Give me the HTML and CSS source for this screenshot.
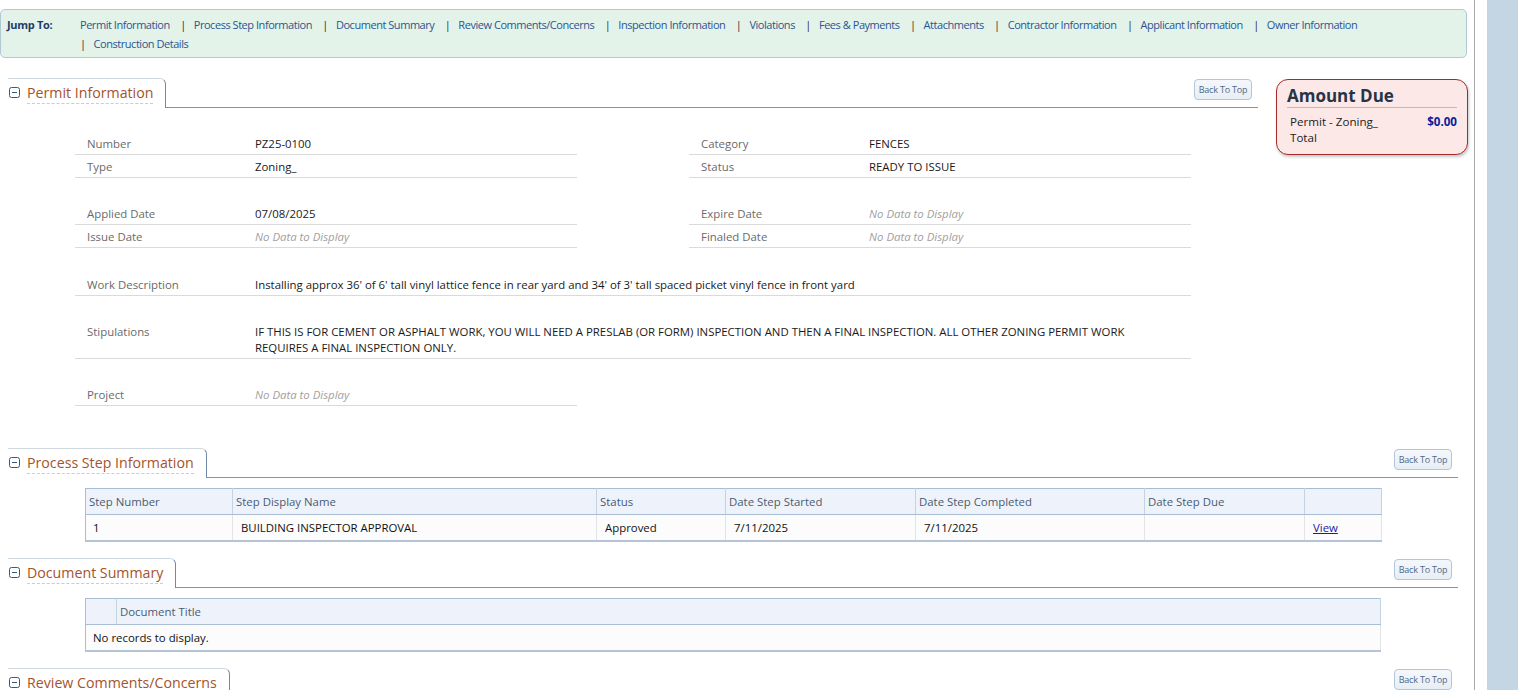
FILE: index.html
```html
<!DOCTYPE html>
<html>
<head>
<meta charset="utf-8">
<title>Permit</title>
<link rel="stylesheet" href="styles.css">
</head>
<body>
<div class="page">
  <div class="main">
    <nav class="jump">
      <div class="jump-label">Jump To:</div>
      <div class="jump-links">
        <span class="ji"><a href="#">Permit Information</a></span>
        <span class="ji"><span class="sep">|</span><a href="#">Process Step Information</a></span>
        <span class="ji"><span class="sep">|</span><a href="#">Document Summary</a></span>
        <span class="ji"><span class="sep">|</span><a href="#">Review Comments/Concerns</a></span>
        <span class="ji"><span class="sep">|</span><a href="#">Inspection Information</a></span>
        <span class="ji"><span class="sep">|</span><a href="#">Violations</a></span>
        <span class="ji"><span class="sep">|</span><a href="#">Fees &amp; Payments</a></span>
        <span class="ji"><span class="sep">|</span><a href="#">Attachments</a></span>
        <span class="ji"><span class="sep">|</span><a href="#">Contractor Information</a></span>
        <span class="ji"><span class="sep">|</span><a href="#">Applicant Information</a></span>
        <span class="ji"><span class="sep">|</span><a href="#">Owner Information</a></span>
        <span class="ji"><span class="sep">|</span><a href="#">Construction Details</a></span>
      </div>
    </nav>

    <div class="top-row">
      <section class="section">
        <div class="sec-head">
          <div class="tab">
            <svg class="toggle" width="11" height="11" viewBox="0 0 11 11"><rect x="0.5" y="0.5" width="10" height="10" rx="2" fill="#fff" stroke="#35597f"/><line x1="3" y1="5.5" x2="8" y2="5.5" stroke="#35597f" stroke-width="1"/></svg>
            <span class="tab-title">Permit Information</span>
          </div>
          <div class="head-fill"><button class="btt">Back To Top</button></div>
        </div>
        <div class="fields">
          <div class="group">
            <div class="frow"><span class="lbl">Number</span><span class="val">PZ25-0100</span></div>
            <div class="frow"><span class="lbl">Type</span><span class="val">Zoning_</span></div>
          </div>
          <div class="group">
            <div class="frow"><span class="lbl">Category</span><span class="val">FENCES</span></div>
            <div class="frow"><span class="lbl">Status</span><span class="val">READY TO ISSUE</span></div>
          </div>
          <div class="group">
            <div class="frow"><span class="lbl">Applied Date</span><span class="val">07/08/2025</span></div>
            <div class="frow"><span class="lbl">Issue Date</span><span class="val empty">No Data to Display</span></div>
          </div>
          <div class="group">
            <div class="frow"><span class="lbl">Expire Date</span><span class="val empty">No Data to Display</span></div>
            <div class="frow"><span class="lbl">Finaled Date</span><span class="val empty">No Data to Display</span></div>
          </div>
          <div class="group wide gap25">
            <div class="frow"><span class="lbl">Work Description</span><span class="val">Installing approx 36' of 6' tall vinyl lattice fence in rear yard and 34' of 3' tall spaced picket vinyl fence in front yard</span></div>
          </div>
          <div class="group wide">
            <div class="frow"><span class="lbl">Stipulations</span><span class="val">IF THIS IS FOR CEMENT OR ASPHALT WORK, YOU WILL NEED A PRESLAB (OR FORM) INSPECTION AND THEN A FINAL INSPECTION. ALL OTHER ZONING PERMIT WORK REQUIRES A FINAL INSPECTION ONLY.</span></div>
          </div>
          <div class="group">
            <div class="frow"><span class="lbl">Project</span><span class="val empty">No Data to Display</span></div>
          </div>
        </div>
      </section>
      <aside class="amount">
        <div class="amount-title">Amount Due</div>
        <div class="amount-line"><span>Permit - Zoning_</span><span class="money">$0.00</span></div>
        <div class="amount-line"><span>Total</span></div>
      </aside>
    </div>

    <section class="section full">
      <div class="sec-head">
        <div class="tab">
          <svg class="toggle" width="11" height="11" viewBox="0 0 11 11"><rect x="0.5" y="0.5" width="10" height="10" rx="2" fill="#fff" stroke="#35597f"/><line x1="3" y1="5.5" x2="8" y2="5.5" stroke="#35597f" stroke-width="1"/></svg>
          <span class="tab-title">Process Step Information</span>
        </div>
        <div class="head-fill"><button class="btt">Back To Top</button></div>
      </div>
      <table class="grid">
        <colgroup>
          <col class="c147"><col class="c364"><col class="c129"><col class="c190"><col class="c229"><col class="c160"><col class="c77">
        </colgroup>
        <thead>
          <tr><th>Step Number</th><th>Step Display Name</th><th>Status</th><th>Date Step Started</th><th>Date Step Completed</th><th>Date Step Due</th><th></th></tr>
        </thead>
        <tbody>
          <tr><td>1</td><td>BUILDING INSPECTOR APPROVAL</td><td>Approved</td><td>7/11/2025</td><td>7/11/2025</td><td></td><td><a href="#" class="view">View</a></td></tr>
        </tbody>
      </table>
    </section>

    <section class="section full">
      <div class="sec-head">
        <div class="tab">
          <svg class="toggle" width="11" height="11" viewBox="0 0 11 11"><rect x="0.5" y="0.5" width="10" height="10" rx="2" fill="#fff" stroke="#35597f"/><line x1="3" y1="5.5" x2="8" y2="5.5" stroke="#35597f" stroke-width="1"/></svg>
          <span class="tab-title">Document Summary</span>
        </div>
        <div class="head-fill"><button class="btt">Back To Top</button></div>
      </div>
      <table class="grid">
        <colgroup><col class="c31"><col></colgroup>
        <thead>
          <tr><th></th><th>Document Title</th></tr>
        </thead>
        <tbody>
          <tr><td colspan="2">No records to display.</td></tr>
        </tbody>
      </table>
    </section>

    <section class="section full">
      <div class="sec-head">
        <div class="tab">
          <svg class="toggle" width="11" height="11" viewBox="0 0 11 11"><rect x="0.5" y="0.5" width="10" height="10" rx="2" fill="#fff" stroke="#35597f"/><line x1="3" y1="5.5" x2="8" y2="5.5" stroke="#35597f" stroke-width="1"/></svg>
          <span class="tab-title">Review Comments/Concerns</span>
        </div>
        <div class="head-fill"><button class="btt">Back To Top</button></div>
      </div>
      <div class="spacer"></div>
    </section>
  </div>
  <div class="side"></div>
</div>
</body>
</html>
```

FILE: styles.css
```css
html, body {
  margin: 0;
  padding: 0;
}
body {
  font-family: "Open Sans", "Noto Sans", sans-serif;
  color: #1e1e1e;
  background: #fff;
}
.page {
  display: flex;
  height: 100vh;
  overflow: hidden;
}
.main {
  flex: none;
  width: 1474px;
  border-right: 1px solid #a9a9a9;
  padding-top: 9px;
}
.side {
  flex: none;
  width: 31px;
  margin-left: 12px;
  background: #c4d6e3;
}

/* Jump bar */
.jump {
  display: flex;
  margin-right: 7px;
  background: #e3f3ea;
  border: 1px solid #b2c8d3;
  border-radius: 5px;
  padding: 5px 7px 4px 6px;
}
.jump-label {
  flex: none;
  width: 73px;
  font-size: 11px;
  line-height: 19px;
  font-weight: bold;
  letter-spacing: -0.3px;
  color: #1c3c6a;
}
.jump-links {
  flex: 1;
  font-size: 11px;
  line-height: 19px;
  letter-spacing: -0.46px;
}
.ji {
  white-space: nowrap;
}
.jump-links a {
  color: #2b5592;
  text-decoration: none;
  margin-right: 8px;
}
.sep {
  color: #2a2a2a;
  margin-right: 8px;
}

/* Sections */
.top-row {
  display: flex;
  margin-top: 20px;
}
.section {
  margin-left: 8px;
}
.top-row .section {
  flex: 1;
  min-width: 0;
}
.section.full {
  margin-right: 16px;
}
.sec-head {
  display: flex;
  height: 30px;
}
.tab {
  flex: none;
  box-sizing: border-box;
  height: 30px;
  display: flex;
  align-items: flex-start;
  padding: 4px 12px 0 1px;
  border-top: 1px solid #cfd7df;
  border-right: 1px solid #6f8aa6;
  border-top-right-radius: 6px;
}
.toggle {
  flex: none;
  margin-top: 4px;
  margin-right: 7px;
}
.tab-title {
  font-size: 14.2px;
  line-height: 20px;
  color: #a4532a;
  border-bottom: 1px dashed #cccccc;
}
.head-fill {
  flex: 1;
  display: flex;
  justify-content: flex-end;
  align-items: flex-start;
  border-bottom: 1px solid #7d95ae;
}
.btt {
  margin: 1px 6px 0 0;
  width: 58px;
  height: 21px;
  padding: 0;
  font-family: "Open Sans", sans-serif;
  font-size: 9px;
  letter-spacing: -0.2px;
  color: #4c6a8b;
  background: linear-gradient(#f5f8fb, #e7eef4);
  border: 1px solid #b3c5d7;
  border-radius: 4px;
}

/* Fields */
.fields {
  display: grid;
  grid-template-columns: 502px 502px;
  column-gap: 112px;
  row-gap: 24px;
  padding: 24px 0 42px 67px;
}
.group.wide {
  grid-column: 1 / span 2;
}
.group.wide .frow {
  padding-right: 50px;
}
.group.gap25 {
  margin-top: 1px;
}
.frow {
  display: grid;
  grid-template-columns: 168px 1fr;
  padding: 4px 0 2px 12px;
  line-height: 16px;
  font-size: 11.4px;
  border-bottom: 1px solid #dadada;
}
.lbl {
  color: #6a6a6a;
}
.val {
  color: #1a1a1a;
}
.val.empty {
  color: #a0a0a0;
  font-style: italic;
}

/* Amount due */
.amount {
  flex: none;
  align-self: flex-start;
  box-sizing: border-box;
  width: 192px;
  height: 76px;
  margin: 1px 6px 0 18px;
  padding: 5px 10px 8px 10px;
  background: #fde8e8;
  border: 1px solid #a52a2a;
  border-radius: 12px;
  box-shadow: 1px 2px 3px rgba(0, 0, 0, 0.22);
}
.amount-title {
  font-size: 17px;
  line-height: 22px;
  font-weight: bold;
  color: #253447;
  border-bottom: 1px solid #c9b7b7;
  margin-bottom: 6px;
}
.amount-line {
  display: flex;
  justify-content: space-between;
  padding-left: 3px;
  font-size: 11.6px;
  line-height: 16px;
  color: #222;
}
.money {
  font-weight: bold;
  color: #0a1c9e;
}

/* Tables */
.grid {
  margin: 10px 0 16px 77px;
  width: 1296px;
  border-collapse: collapse;
  table-layout: fixed;
  font-size: 11.4px;
  border: 1px solid #a9bdd4;
  border-bottom: 2px solid #b4c4d6;
}
.c147 { width: 147px; }
.c364 { width: 364px; }
.c129 { width: 129px; }
.c190 { width: 190px; }
.c229 { width: 229px; }
.c160 { width: 160px; }
.c77 { width: 77px; }
.c31 { width: 31px; }
.grid th {
  height: 25px;
  padding: 0 4px 0 3px;
  text-align: left;
  font-weight: normal;
  color: #4a5b71;
  background: #eef3fb;
  border-right: 1px solid #c4d2e1;
  border-bottom: 1px solid #a9bdd4;
}
.grid td {
  height: 25px;
  padding: 0 8px;
  color: #111;
  background: #fcfcfc;
  border-right: 1px solid #e4e4e4;
}
.grid td:first-child {
  padding-left: 7px;
}
.view {
  color: #1a1aa6;
  text-decoration: underline;
}
.spacer {
  height: 40px;
}
```
